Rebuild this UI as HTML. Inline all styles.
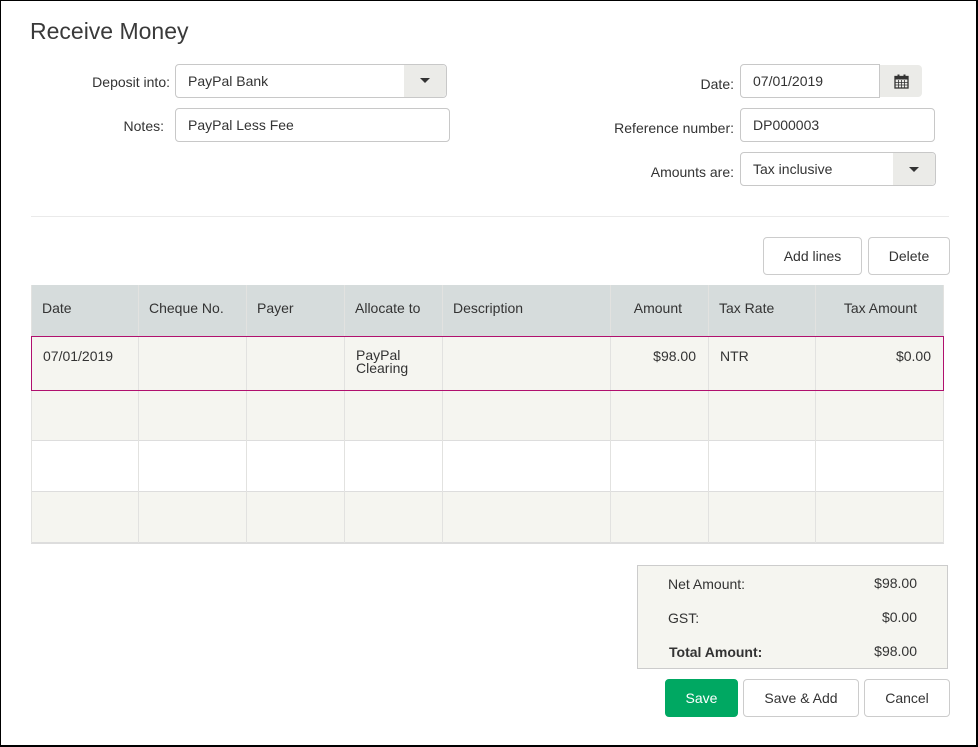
<!DOCTYPE html><html><head><style>
*{box-sizing:border-box;margin:0;padding:0}
body{width:978px;height:747px;position:relative;background:#fff;font-family:"Liberation Sans",Arial,sans-serif;color:#333;font-size:14px;overflow:hidden}
.frame{position:absolute;left:0;top:0;width:978px;height:747px;border:1px solid #000;border-right-width:2px;border-bottom-width:2px}
.a{position:absolute}
.lbl{position:absolute;text-align:right;font-size:14px;color:#333}
.inp{position:absolute;border:1px solid #c8c8c8;border-radius:4px;background:#fff;padding-left:12px;font-size:14px;line-height:32px;color:#333}
.dd{position:absolute;background:#ebebe8;border-radius:0 4px 4px 0}
.tri{position:absolute;width:0;height:0;border-left:5px solid transparent;border-right:5px solid transparent;border-top:5px solid #333}
.btn{position:absolute;border:1px solid #ccc;border-radius:4px;background:#fff;text-align:center;font-size:14px;color:#333}
.col{position:absolute;top:285px;height:258px;border-left:1px solid #e2e2e0}
.th{position:absolute;top:300px;font-size:14px;color:#333}
.td{position:absolute;font-size:14px;color:#333}
</style></head><body>
<div class="frame"></div>
<div class="a" style="left:30px;top:18px;font-size:23px;color:#3a3a3a">Receive Money</div>

<div class="lbl" style="left:60px;top:74px;width:110px">Deposit into:</div>
<div class="inp" style="left:175px;top:64px;width:272px;height:34px">PayPal Bank</div>
<div class="dd" style="left:404px;top:65px;width:42px;height:32px"><div class="tri" style="left:16px;top:13px"></div></div>
<div class="lbl" style="left:60px;top:118px;width:104px">Notes:</div>
<div class="inp" style="left:175px;top:108px;width:275px;height:34px">PayPal Less Fee</div>

<div class="lbl" style="left:600px;top:76px;width:134px">Date:</div>
<div class="inp" style="left:740px;top:64px;width:140px;height:34px;border-radius:4px 0 0 4px">07/01/2019</div>
<div class="dd" style="left:880px;top:65px;width:42px;height:32px">
<svg class="a" style="left:14px;top:9px" width="15" height="15" viewBox="0 0 15 15"><rect x="1" y="2.5" width="13" height="11.5" fill="none" stroke="#333" stroke-width="1.3"/><rect x="1" y="2.5" width="13" height="3" fill="#333"/><rect x="3.5" y="0.5" width="2" height="3" fill="#333"/><rect x="9.5" y="0.5" width="2" height="3" fill="#333"/><path d="M1 8.5h13M1 11h13M4.5 6v8M7.5 6v8M10.5 6v8" stroke="#333" stroke-width="0.8"/></svg></div>
<div class="lbl" style="left:580px;top:120px;width:154px">Reference number:</div>
<div class="inp" style="left:740px;top:108px;width:195px;height:34px">DP000003</div>
<div class="lbl" style="left:600px;top:164px;width:134px">Amounts are:</div>
<div class="inp" style="left:740px;top:152px;width:196px;height:34px">Tax inclusive</div>
<div class="dd" style="left:893px;top:153px;width:42px;height:32px"><div class="tri" style="left:16px;top:14px"></div></div>

<div class="a" style="left:31px;top:216px;width:918px;height:1px;background:#eaeaea"></div>

<div class="btn" style="left:763px;top:237px;width:99px;height:38px;line-height:36px">Add lines</div>
<div class="btn" style="left:868px;top:237px;width:82px;height:38px;line-height:36px">Delete</div>

<div class="a" style="left:31px;top:285px;width:913px;height:51px;background:#d6dcdc"></div>
<div class="a" style="left:31px;top:336px;width:913px;height:207px;background:#f5f5f0"></div>
<div class="a" style="left:31px;top:441px;width:913px;height:51px;background:#fff"></div>
<div class="a" style="left:31px;top:390px;width:913px;height:1px;background:#ddd"></div>
<div class="a" style="left:31px;top:440px;width:913px;height:1px;background:#ddd"></div>
<div class="a" style="left:31px;top:491px;width:913px;height:1px;background:#ddd"></div>
<div class="a" style="left:31px;top:542px;width:913px;height:2px;background:#ddd"></div>
<div class="col" style="left:31px"></div><div class="col" style="left:138px"></div><div class="col" style="left:246px"></div><div class="col" style="left:344px"></div><div class="col" style="left:442px"></div><div class="col" style="left:610px"></div><div class="col" style="left:708px"></div><div class="col" style="left:815px"></div><div class="col" style="left:943px"></div>
<div class="a" style="left:31px;top:336px;width:913px;height:55px;border:1px solid #b0106e"></div>
<div class="th" style="left:42px">Date</div><div class="th" style="left:149px">Cheque No.</div><div class="th" style="left:257px">Payer</div><div class="th" style="left:355px">Allocate to</div><div class="th" style="left:453px">Description</div><div class="th" style="left:610px;width:72px;text-align:right">Amount</div><div class="th" style="left:719px">Tax Rate</div><div class="th" style="left:815px;width:102px;text-align:right">Tax Amount</div>
<div class="td" style="left:43px;top:348px">07/01/2019</div>
<div class="td" style="left:356px;top:349px;line-height:13px">PayPal<br>Clearing</div>
<div class="td" style="left:610px;top:348px;width:86px;text-align:right">$98.00</div>
<div class="td" style="left:720px;top:348px">NTR</div>
<div class="td" style="left:815px;top:348px;width:116px;text-align:right">$0.00</div>

<div class="a" style="left:637px;top:565px;width:311px;height:104px;border:1px solid #ccc;background:#f5f5f0"></div>
<div class="td" style="left:668px;top:576px">Net Amount:</div><div class="td" style="left:800px;top:575px;width:117px;text-align:right">$98.00</div>
<div class="td" style="left:668px;top:610px">GST:</div><div class="td" style="left:800px;top:609px;width:117px;text-align:right">$0.00</div>
<div class="td" style="left:669px;top:644px;font-weight:bold">Total Amount:</div><div class="td" style="left:800px;top:643px;width:117px;text-align:right">$98.00</div>

<div class="btn" style="left:665px;top:679px;width:73px;height:38px;line-height:36px;background:#00a862;border-color:#00a862;color:#fff">Save</div>
<div class="btn" style="left:743px;top:679px;width:116px;height:38px;line-height:36px">Save &amp; Add</div>
<div class="btn" style="left:864px;top:679px;width:86px;height:38px;line-height:36px">Cancel</div>
</body></html>
